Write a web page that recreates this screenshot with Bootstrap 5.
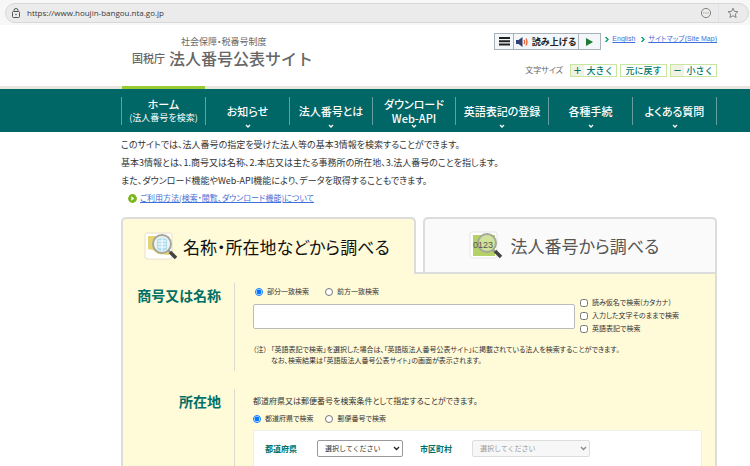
<!DOCTYPE html>
<html lang="ja">
<head>
<meta charset="utf-8">
<meta name="viewport" content="width=device-width, initial-scale=1">
<title>国税庁 法人番号公表サイト</title>
<link href="https://cdn.jsdelivr.net/npm/bootstrap@5.3.0/dist/css/bootstrap.min.css" rel="stylesheet">
<style>
:root { --teal: #006666; --cream: #fffad8; --edge: #dcdcdc; }
body { font-family: "Noto Sans CJK JP", sans-serif; font-size: 9px; line-height: 18px; color: #333; font-feature-settings: "palt"; }
a { color: #3f6fd8; }
.browser-bar { height: 25px; background: #f7f7f7; padding: 3px 1px 2px 5px; }
.address { height: 20px; background: #ebebeb; border: 1px solid #d8d8d8; padding: 0 9px 0 5px; gap: 6px; font-family: "Open Sans", sans-serif; font-size: 8px; color: #3a3a3a; }
.page { padding-left: 121px; padding-right: 33px; }
.masthead { height: 61px; color: #666; }
.brand { padding: 10px 0 0 11px; line-height: 16px; font-feature-settings: normal; }
.brand-sub { font-size: 9px; padding-left: 49px; line-height: 14px; font-feature-settings: "palt"; }
.brand-org { font-size: 11px; font-weight: 500; }
.brand-name { font-size: 16px; font-weight: 500; line-height: 18px; }
.reader { border: 1px solid #a9b2bb; height: 17px; background: #f4f7fa; }
.reader button { border: 0; background: none; padding: 0; line-height: 14px; color: #222; font-weight: 700; font-size: 9px; }
.reader button + button { border-left: 1px solid #a9b2bb; }
.reader .r-menu { width: 18px; } .reader .r-main { width: 65px; } .reader .r-play { width: 22px; }
.util { font-family: "Liberation Sans", "Noto Sans CJK JP", sans-serif; font-size: 7px; line-height: 12px; gap: 6px; }
.util span { display: flex; align-items: center; gap: 3px; }
.size-row { margin-top: 11px; gap: 3px; font-size: 8px; }
.size-row button { border: 1px solid #c8e6a0; background: #fff; color: #00796b; font-weight: 500; font-size: 9px; line-height: 11px; height: 13px; width: 47px; padding: 0; }
.size-row .sign { background: #f0f3e4; width: 13px; font-weight: 700; }
.gnav { background: var(--teal); border-top: 3px solid #e8e6de; height: 46px; }
.gnav ul { display: grid; grid-template-columns: 85fr 84fr 83fr 83fr 93fr 84fr 84fr; padding-top: 8px; }
.gnav li { border-right: 1px solid #669f9f; height: 28px; }
.gnav li:first-child { border-left: 1px solid #669f9f; position: relative; }
.gnav li:first-child::before { content: ""; position: absolute; left: 0; right: 0; top: -11px; height: 3px; background: #99cc33; }
.gnav a { color: #fff; font-weight: 500; font-size: 11px; line-height: 14px; height: 28px; }
.gnav .fine { font-size: 9px; font-weight: 400; }
.gnav .chev { position: absolute; bottom: -4px; left: 50%; margin-left: -3px; }
.intro { padding-top: 4px; }
.how { padding-left: 7px; line-height: 16px; gap: 3px; font-size: 8px; }
.tabs { display: grid; grid-template-columns: 1fr 1fr; gap: 7px; padding-top: 11px; }
.tabs a { height: 55px; border: 2px solid var(--edge); border-radius: 5px 5px 0 0; font-size: 17px; color: #555; background: #fafafa; gap: 5px; border-bottom: 0; white-space: nowrap; }
.tabs .on { position: relative; background: var(--cream); color: #111; margin-bottom: -2px; height: 57px; padding-left: 21px; }
.tabs .off { padding-left: 44px; gap: 8px; }
.panel { background: var(--cream); border: 2px solid var(--edge); padding: 9px 13px 0 0; }
.term { width: 112px; flex: none; border-right: 1px solid #dcdad0; padding: 2px 13px 0 0; text-align: right; font-size: 14px; font-weight: 700; line-height: 20px; color: #007067; }
.fields { padding-left: 18px; font-size: 7px; line-height: 11px; }
.pick { display: flex; align-items: center; gap: 4px; }
.pick input { width: 8px; height: 8px; margin: 0; flex: none; }
.match-row { gap: 16px; padding: 3px 0 0 2px; }
.area-row { gap: 12px; }
.checks { gap: 2px; width: 127px; padding: 0 0 2px 5px; flex: none; }
.name-box { height: 25px; border: 1px solid #bbb; border-radius: 2px; padding: 0 5px; font-size: 10px; background: #fff; min-width: 0; }
.row-name { min-height: 88px; }
.row-place { margin-top: 18px; }
.lead-in { font-size: 8px; line-height: 18px; padding: 3px 0; }
.place-box { background: #fff; border: 1px solid #eee; padding: 9px 11px 40px; margin-top: 6px; }
.place-box label { font-size: 8px; font-weight: 700; color: #007067; }
.place-box select { appearance: none; display: block; height: 17px; border: 1px solid #999; border-radius: 2px; font-size: 7px; line-height: 13px; padding: 0 7px; color: #333; width: 100%; background: #fff; }
.place-box select:disabled { border-color: #ddd; background: #f7f7f7; color: #999; opacity: 1; }
.pull { position: relative; }
.pref { width: 86px; margin: 0 17px 0 20px; }
.city { width: 118px; margin-left: 20px; }
.pull svg { position: absolute; right: 3px; top: 6px; pointer-events: none; }
</style>
<script src="https://cdn.jsdelivr.net/npm/bootstrap@5.3.0/dist/js/bootstrap.bundle.min.js"></script>
</head>
<body class="vh-100 overflow-hidden">
<div class="browser-bar">
  <div class="address rounded-pill d-flex align-items-center">
    <svg width="10" height="11" viewBox="0 0 10 11" fill="none" stroke="#555"><rect x="1.5" y="3.5" width="7" height="6" rx="1"/><path d="M3 3.5V2.5a2 2 0 0 1 4 0v1"/><circle cx="5" cy="6.5" r=".4"/></svg>
    <span class="flex-grow-1">https://www.houjin-bangou.nta.go.jp</span>
    <svg width="12" height="12" viewBox="0 0 12 12" fill="none" stroke="#777" stroke-width=".9"><circle cx="6" cy="6" r="4.6"/><path d="M3.3 6h1M5.5 6h1M7.7 6h1"/></svg>
    <span class="border-start my-1">&nbsp;</span>
    <svg width="12" height="12" viewBox="0 0 12 12" fill="none" stroke="#777" stroke-width=".9" stroke-linejoin="round"><path d="M6 1.2l1.4 3.2 3.5.3-2.6 2.3.8 3.5L6 8.7l-3.1 1.8.8-3.5L1.1 4.7l3.5-.3z"/></svg>
  </div>
</div>

<header>
  <div class="page masthead d-flex justify-content-between">
    <div class="brand">
      <div class="brand-sub">社会保障・税番号制度</div>
      <div class="d-flex align-items-center gap-1"><span class="brand-org">国税庁</span><span class="brand-name">法人番号公表サイト</span></div>
    </div>
    <div class="pt-2">
      <div class="d-flex align-items-start justify-content-end">
        <div class="reader d-flex me-1">
          <button class="r-menu d-flex align-items-center justify-content-center" aria-label="メニュー"><svg width="11" height="9" viewBox="0 0 11 9" fill="#222"><path d="M0 0h11v2H0zM0 3.3h11v2H0zM0 6.6h11v2H0z"/></svg></button>
          <button class="r-main d-flex align-items-center justify-content-center gap-1"><svg width="12" height="10" viewBox="0 0 12 10"><path d="M0 3h2.500L6.500 0v10L2.500 7H0z" fill="#334070"/><path d="M8 3q1.300 2 0 4M10 1.500q2 3.500 0 7" fill="none" stroke="#e8602c" stroke-width="1.300"/></svg><span>読み上げる</span></button>
          <button class="r-play d-flex align-items-center justify-content-center" aria-label="再生"><svg width="7" height="8" viewBox="0 0 7 8"><path d="M0 0l7 4-7 4z" fill="#1c7a35"/></svg></button>
        </div>
        <div class="util d-flex">
          <span><svg width="4" height="5" viewBox="0 0 4 5"><path d="M.5 0l2.5 2.5L.5 5" fill="none" stroke="#0b9a7a" stroke-width="1.4"/></svg><a href="#">English</a></span>
          <span><svg width="4" height="5" viewBox="0 0 4 5"><path d="M.5 0l2.5 2.5L.5 5" fill="none" stroke="#0b9a7a" stroke-width="1.4"/></svg><a href="#">サイトマップ(Site Map)</a></span>
        </div>
      </div>
      <div class="size-row d-flex align-items-center justify-content-end">
        <span class="me-1">文字サイズ</span>
        <button class="d-flex"><span class="sign">＋</span><span class="flex-grow-1">大きく</span></button>
        <button>元に戻す</button>
        <button class="d-flex"><span class="sign">－</span><span class="flex-grow-1">小さく</span></button>
      </div>
    </div>
  </div>
  <nav class="gnav page">
    <ul class="list-unstyled m-0">
      <li><a href="#" class="d-flex flex-column justify-content-center text-center text-decoration-none">ホーム<span class="fine">(法人番号を検索)</span></a></li>
      <li class="position-relative"><a href="#" class="d-flex flex-column justify-content-center text-center text-decoration-none">お知らせ</a><svg class="chev" width="6" height="5" viewBox="0 0 6 5"><path d="M1 1l2 2 2-2" fill="none" stroke="#fff" stroke-width="1.3"/></svg></li>
      <li class="position-relative"><a href="#" class="d-flex flex-column justify-content-center text-center text-decoration-none">法人番号とは</a><svg class="chev" width="6" height="5" viewBox="0 0 6 5"><path d="M1 1l2 2 2-2" fill="none" stroke="#fff" stroke-width="1.3"/></svg></li>
      <li class="position-relative"><a href="#" class="d-flex flex-column justify-content-center text-center text-decoration-none"><span>ダウンロード</span><span>Web-API</span></a><svg class="chev" width="6" height="5" viewBox="0 0 6 5"><path d="M1 1l2 2 2-2" fill="none" stroke="#fff" stroke-width="1.3"/></svg></li>
      <li class="position-relative"><a href="#" class="d-flex flex-column justify-content-center text-center text-decoration-none">英語表記の登録</a><svg class="chev" width="6" height="5" viewBox="0 0 6 5"><path d="M1 1l2 2 2-2" fill="none" stroke="#fff" stroke-width="1.3"/></svg></li>
      <li class="position-relative"><a href="#" class="d-flex flex-column justify-content-center text-center text-decoration-none">各種手続</a><svg class="chev" width="6" height="5" viewBox="0 0 6 5"><path d="M1 1l2 2 2-2" fill="none" stroke="#fff" stroke-width="1.3"/></svg></li>
      <li class="position-relative"><a href="#" class="d-flex flex-column justify-content-center text-center text-decoration-none">よくある質問</a><svg class="chev" width="6" height="5" viewBox="0 0 6 5"><path d="M1 1l2 2 2-2" fill="none" stroke="#fff" stroke-width="1.3"/></svg></li>
    </ul>
  </nav>
</header>

<main class="page">
  <div class="intro">
    <p class="m-0">このサイトでは、法人番号の指定を受けた法人等の基本3情報を検索することができます。</p>
    <p class="m-0">基本3情報とは、1.商号又は名称、2.本店又は主たる事務所の所在地、3.法人番号のことを指します。</p>
    <p class="m-0">また、ダウンロード機能やWeb-API機能により、データを取得することもできます。</p>
    <div class="how d-flex align-items-center"><svg width="9" height="9" viewBox="0 0 9 9"><circle cx="4.5" cy="4.5" r="4.4" fill="#7ab51d"/><path d="M3.3 2.2l3 2.3-3 2.3z" fill="#fff"/></svg><a href="#">ご利用方法(検索・閲覧、ダウンロード機能)について</a></div>
  </div>

  <div class="tabs">
    <a href="#" class="on d-flex align-items-center text-decoration-none">
      <svg width="34" height="30" viewBox="0 0 34 30"><rect x="1" y="1" width="27" height="26" rx="2" fill="#fff" stroke="#e6e2cc"/><path d="M4 4h21v21H4z" fill="#e3d375"/><path d="M3 17l6 1 5 4 11 1v2H4z" fill="#fff"/><circle cx="18" cy="12" r="9" fill="#edf3ef" stroke="#a5a79c" stroke-width="2"/><path d="M13 7.5l5-2 5 2v10l-5 2-5-2z" fill="#b0dcf0"/><path d="M14 9h8M14 12h8M14 15h8M18 6v13" stroke="#fff"/><path d="M24 18l3 3" stroke="#999" stroke-width="2"/><path d="M26 20l6 6" stroke="#444" stroke-width="3.5"/></svg>
      <span>名称・所在地などから調べる</span>
    </a>
    <a href="#" class="off d-flex align-items-center text-decoration-none">
      <svg width="34" height="30" viewBox="0 0 34 30"><rect x="1" y="1" width="27" height="26" rx="2" fill="#fff" stroke="#e6e6e6"/><path d="M4 4h22v21H4z" fill="#b4d266"/><circle cx="18" cy="12" r="9" fill="#cfe39a" stroke="#a5a79c" stroke-width="2"/><text x="4" y="17" font-size="9" fill="#555" font-family="Liberation Sans">0123</text><path d="M24 19l3 3" stroke="#999" stroke-width="2"/><path d="M26 20l6 6" stroke="#444" stroke-width="3.5"/></svg>
      <span>法人番号から調べる</span>
    </a>
  </div>

  <div class="panel">
    <section class="d-flex row-name">
      <h2 class="term m-0">商号又は名称</h2>
      <div class="fields flex-grow-1">
        <div class="d-flex match-row">
          <label class="pick"><input type="radio" name="match" checked>部分一致検索</label>
          <label class="pick"><input type="radio" name="match">前方一致検索</label>
        </div>
        <div class="d-flex align-items-center">
          <input type="text" class="name-box flex-grow-1" aria-label="商号又は名称">
          <div class="checks d-flex flex-column">
            <label class="pick"><input type="checkbox">読み仮名で検索(カタカナ)</label>
            <label class="pick"><input type="checkbox">入力した文字そのままで検索</label>
            <label class="pick"><input type="checkbox">英語表記で検索</label>
          </div>
        </div>
        <div class="d-flex gap-1 pt-2">
          <span>（注）</span>
          <span>「英語表記で検索」を選択した場合は、「英語版法人番号公表サイト」に掲載されている法人を検索することができます。<br>なお、検索結果は「英語版法人番号公表サイト」の画面が表示されます。</span>
        </div>
      </div>
    </section>
    <section class="d-flex row-place">
      <h2 class="term m-0">所在地</h2>
      <div class="fields flex-grow-1">
        <p class="m-0 lead-in">都道府県又は郵便番号を検索条件として指定することができます。</p>
        <div class="d-flex area-row">
          <label class="pick"><input type="radio" name="area" checked>都道府県で検索</label>
          <label class="pick"><input type="radio" name="area">郵便番号で検索</label>
        </div>
        <div class="place-box d-flex align-items-center">
          <label for="pref">都道府県</label>
          <div class="pull pref"><select id="pref"><option>選択してください</option></select><svg width="7" height="5" viewBox="0 0 7 5"><path d="M1 1l2.5 2.5L6 1" fill="none" stroke="#222" stroke-width="1.3"/></svg></div>
          <label for="city">市区町村</label>
          <div class="pull city"><select id="city" disabled><option>選択してください</option></select><svg width="7" height="5" viewBox="0 0 7 5"><path d="M1 1l2.5 2.5L6 1" fill="none" stroke="#888" stroke-width="1.3"/></svg></div>
        </div>
      </div>
    </section>
  </div>
</main>
</body>
</html>
